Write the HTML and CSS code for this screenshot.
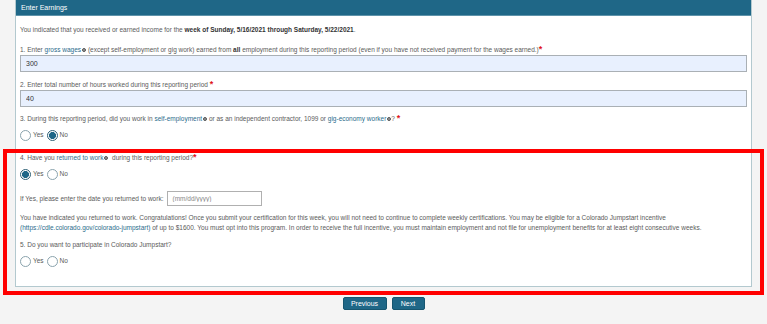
FILE: index.html
```html
<!DOCTYPE html>
<html lang="en">
<head>
    <meta charset="UTF-8">
    <meta name="viewport" content="width=device-width, initial-scale=1.0">
    <title>Enter Earnings</title>
    <link rel="stylesheet" href="styles.css">
</head>
<body>
    <div class="page">
        <!-- Earnings Panel -->
        <div class="panel">
            <div class="panel-heading">Enter Earnings</div>
            <div class="panel-body">
                <p class="intro">You indicated that you received or earned income for the <b>week of Sunday, 5/16/2021 through Saturday, 5/22/2021</b>.</p>

                <div class="question q1">
                    <div class="label">1. Enter <a href="#">gross wages</a><span class="info"></span> (except self-employment or gig work) earned from <b>all</b> employment during this reporting period (even if you have not received payment for the wages earned.)<span class="req">*</span></div>
                    <input class="text-input" type="text" value="300">
                </div>

                <div class="question q2">
                    <div class="label">2. Enter total number of hours worked during this reporting period <span class="req">*</span></div>
                    <input class="text-input" type="text" value="40">
                </div>

                <div class="question q3">
                    <div class="label">3. During this reporting period, did you work in <a href="#">self-employment</a><span class="info"></span> or as an independent contractor, 1099 or <a href="#">gig-economy worker</a><span class="info"></span>? <span class="req">*</span></div>
                    <div class="radios">
                        <label class="radio"><span class="circle"></span>Yes</label>
                        <label class="radio"><span class="circle checked"></span>No</label>
                    </div>
                </div>

                <div class="question q4">
                    <div class="label">4. Have you <a href="#">returned to work</a><span class="info"></span> &nbsp;during this reporting period?<span class="req">*</span></div>
                    <div class="radios">
                        <label class="radio"><span class="circle checked"></span>Yes</label>
                        <label class="radio"><span class="circle"></span>No</label>
                    </div>
                </div>

                <div class="date-row">
                    <span>If Yes, please enter the date you returned to work:</span>
                    <input class="date-input" type="text" placeholder="(mm/dd/yyyy)">
                </div>

                <p class="notice">You have indicated you returned to work. Congratulations! Once you submit your certification for this week, you will not need to continue to complete weekly certifications. You may be eligible for a Colorado Jumpstart incentive <a href="#">(https://cdle.colorado.gov/colorado-jumpstart)</a> of up to $1600. You must opt into this program. In order to receive the full incentive, you must maintain employment and not file for unemployment benefits for at least eight consecutive weeks.</p>

                <div class="question q5">
                    <div class="label">5. Do you want to participate in Colorado Jumpstart?</div>
                    <div class="radios">
                        <label class="radio"><span class="circle"></span>Yes</label>
                        <label class="radio"><span class="circle"></span>No</label>
                    </div>
                </div>
            </div>
        </div>

        <!-- Navigation -->
        <div class="actions">
            <button class="btn">Previous</button>
            <button class="btn">Next</button>
        </div>

        <!-- Highlight annotation -->
        <div class="highlight"></div>
    </div>
</body>
</html>
```

FILE: styles.css
```css
/* General Styling */
body {
    margin: 0;
    padding: 0;
    background-color: #f4f4f4;
    font-family: 'Liberation Sans', Arial, sans-serif;
    font-size: 6.5px;
    color: #5a5a5a;
}

.page {
    position: relative;
    width: 767px;
    height: 324px;
}

a {
    color: #2b6c8c;
    text-decoration: none;
}

b {
    color: #333;
}

/* Panel */
.panel {
    margin-left: 15px;
    width: 735px;
    height: 286px;
    background-color: #fff;
    border: 1px solid #b3c9cf;
    border-top: none;
}

.panel-heading {
    height: 16px;
    line-height: 15px;
    padding-left: 5px;
    background-color: #1f6787;
    border-bottom: 1px solid #5e93aa;
    color: #fff;
    font-size: 7px;
    box-sizing: border-box;
}

.panel-body {
    padding: 0 4px;
}

.intro {
    margin: 0;
    padding-top: 9px;
    line-height: 10px;
}

.label {
    line-height: 10px;
}

.req {
    color: #e0151b;
    font-size: 9px;
    font-weight: bold;
    line-height: 8px;
    vertical-align: top;
}

.info {
    display: inline-block;
    width: 4px;
    height: 4px;
    margin-left: 1px;
    box-sizing: border-box;
    border: 1px solid #555;
    border-radius: 50%;
    background-color: #999;
    vertical-align: middle;
}

.text-input {
    display: block;
    width: 100%;
    height: 17px;
    margin: 0;
    padding: 0 5px;
    box-sizing: border-box;
    background-color: #e8f0fe;
    border: 1px solid #aab0b5;
    font-family: inherit;
    font-size: 7px;
    color: #333;
    outline: none;
}

.q1 {
    margin-top: 10px;
}

.q2 {
    margin-top: 8px;
}

.q3 {
    margin-top: 7px;
}

.q4 {
    margin-top: 12px;
}

.q5 {
    margin-top: 7px;
}

/* Radios */
.radios {
    display: flex;
    gap: 3px;
    margin-top: 5px;
}

.radio {
    display: flex;
    align-items: center;
    gap: 2px;
    line-height: 12px;
}

.circle {
    width: 11px;
    height: 11px;
    box-sizing: border-box;
    border: 1px solid #8aa3ad;
    border-radius: 50%;
    background-color: #fff;
}

.circle.checked {
    border: 1px solid #2d5f75;
    background: radial-gradient(circle, #1f6787 0, #1f6787 3.2px, #fff 3.8px);
}

/* Date row */
.date-row {
    display: flex;
    align-items: center;
    gap: 4px;
    margin-top: 11px;
}

.date-input {
    width: 95px;
    height: 15px;
    margin: 0;
    padding: 0 4px;
    box-sizing: border-box;
    border: 1px solid #b0b0b0;
    font-family: inherit;
    font-size: 6.5px;
    outline: none;
}

.date-input::placeholder {
    color: #888;
}

.notice {
    margin: 7px 0 0;
    line-height: 10px;
}

/* Navigation */
.actions {
    display: flex;
    justify-content: center;
    gap: 5px;
    margin-top: 10px;
}

.btn {
    height: 13px;
    padding: 0 5px;
    background-color: #1f6787;
    border: 1px solid #175670;
    border-radius: 2px;
    color: #fff;
    font-family: inherit;
    font-size: 7px;
    line-height: 11px;
}

.btn:first-child {
    width: 44px;
}

.btn:last-child {
    width: 33px;
}

/* Annotation overlay */
.highlight {
    position: absolute;
    left: 3px;
    top: 149px;
    width: 761px;
    height: 146px;
    box-sizing: border-box;
    border: 4px solid #ff0000;
    pointer-events: none;
}
```
